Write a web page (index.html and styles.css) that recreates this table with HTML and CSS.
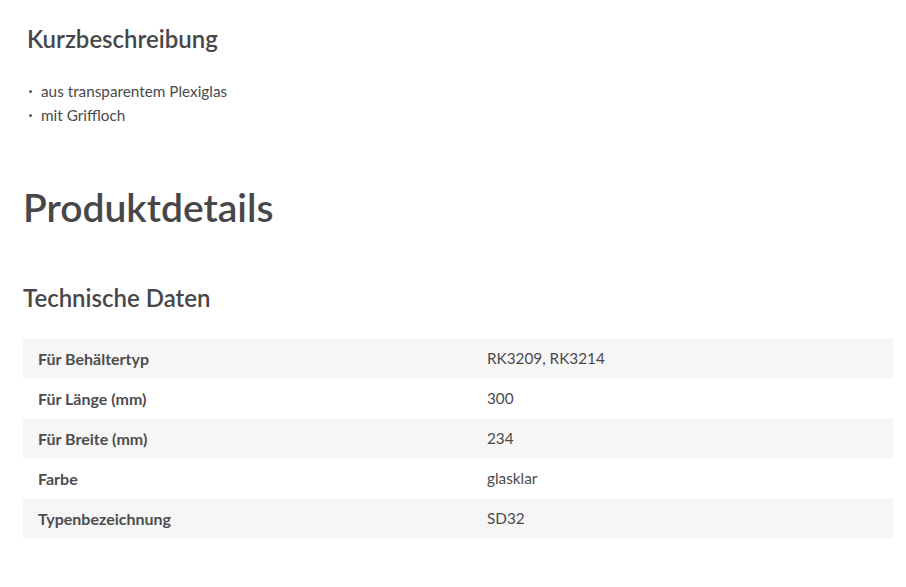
FILE: index.html
```html
<!DOCTYPE html>
<html lang="de">
<head>
<meta charset="utf-8">
<link rel="stylesheet" href="styles.css">
</head>
<body>
<div class="page">
  <section class="short">
    <h3 class="short-title">Kurzbeschreibung</h3>
    <ul class="bullets">
      <li>aus transparentem Plexiglas</li>
      <li>mit Griffloch</li>
    </ul>
  </section>
  <h2 class="details-title">Produktdetails</h2>
  <h3 class="tech-title">Technische Daten</h3>
  <table class="specs">
    <tbody>
      <tr><th>Für Behältertyp</th><td>RK3209, RK3214</td></tr>
      <tr><th>Für Länge (mm)</th><td>300</td></tr>
      <tr><th>Für Breite (mm)</th><td>234</td></tr>
      <tr><th>Farbe</th><td>glasklar</td></tr>
      <tr><th>Typenbezeichnung</th><td>SD32</td></tr>
    </tbody>
  </table>
</div>
</body>
</html>
```
FILE: styles.css
```css
html, body {
  margin: 0;
  padding: 0;
  background: #fff;
}
body {
  font-family: "Lato", "Open Sans", sans-serif;
  color: #4a4a4c;
  font-size: 15.3px;
}
.page {
  padding: 0 13px 0 23px;
}
.short {
  padding: 23px 0 0 4px;
}
.short-title {
  margin: 0;
  font-size: 24px;
  font-weight: 600;
  line-height: 32px;
  color: #47474a;
}
.bullets {
  list-style: none;
  margin: 24px 0 0 0;
  padding: 0;
}
.bullets li {
  position: relative;
  padding-left: 14px;
  line-height: 24px;
}
.bullets li::before {
  content: "";
  position: absolute;
  left: 2px;
  top: 11px;
  width: 3px;
  height: 3px;
  border-radius: 50%;
  background: #555;
}
.details-title {
  margin: 54px 0 0 0;
  font-size: 39px;
  line-height: 52px;
  font-weight: 600;
  color: #47474a;
}
.tech-title {
  margin: 49px 0 0 0;
  font-size: 24px;
  line-height: 32px;
  font-weight: 600;
  color: #47474a;
}
.specs {
  margin-top: 24px;
  width: 870px;
  border-collapse: collapse;
  font-size: 15.3px;
}
.specs tr:nth-child(odd) {
  background: #f6f6f6;
}
.specs th,
.specs td {
  height: 40px;
  padding: 0 15px;
  text-align: left;
  vertical-align: middle;
}
.specs th {
  width: 419px;
  font-weight: 700;
  font-size: 16px;
  color: #4d4d50;
}
.specs td {
  font-weight: 400;
}
```
